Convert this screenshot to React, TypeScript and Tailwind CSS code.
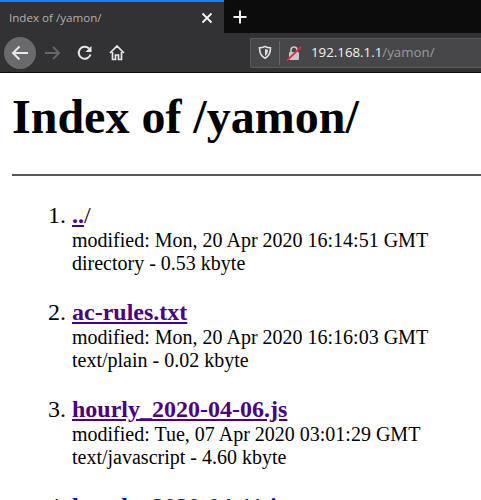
const items = [
  { link: "..", rest: "/", mod: "Mon, 20 Apr 2020 16:14:51 GMT", info: "directory - 0.53 kbyte", color: "text-[#4b0082]" },
  { link: "ac-rules.txt", rest: "", mod: "Mon, 20 Apr 2020 16:16:03 GMT", info: "text/plain - 0.02 kbyte", color: "text-[#4b0082]" },
  { link: "hourly_2020-04-06.js", rest: "", mod: "Tue, 07 Apr 2020 03:01:29 GMT", info: "text/javascript - 4.60 kbyte", color: "text-[#4b0082]" },
  { link: "hourly_2020-04-11.js", rest: "", mod: "Sat, 11 Apr 2020 03:01:29 GMT", info: "text/javascript - 4.60 kbyte", color: "text-[#0000ee]" },
];

export default function App() {
  return (
    <div className="w-[481px] h-[500px] overflow-hidden bg-white font-['Liberation_Serif',serif] text-black flex flex-col">
      <div className="h-[33px] bg-[#0c0c0d] flex shrink-0 font-['Open_Sans',sans-serif]">
        <div className="w-[224px] bg-[#323234] border-t-2 border-[#0a84ff] flex items-center pl-[9px] pr-[10px] justify-between">
          <span className="text-[11.6px] text-[#b1b1b3]">Index of /yamon/</span>
          <svg width="12" height="12" viewBox="0 0 12 12" className="mr-[1px]"><path d="M1.5 1.5l9 9M10.5 1.500l-9 9" stroke="#f5f5f5" strokeWidth="1.8" /></svg>
        </div>
        <div className="flex items-center pl-[9px]">
          <svg width="14" height="14" viewBox="0 0 14 14"><path d="M7 0.5v13M0.5 7h13" stroke="#f0f0f0" strokeWidth="2" /></svg>
        </div>
      </div>
      <div className="h-[40px] bg-[#323234] flex items-center shrink-0 border-b border-[#0c0c0d]">
        <div className="w-[32px] h-[32px] rounded-full bg-[#6a6a6c] ml-[4px] flex items-center justify-center">
          <svg width="18" height="16" viewBox="0 0 18 16"><path d="M17 8H2M8.500 1.500L2 8l6.500 6.500" fill="none" stroke="#e8e8e8" strokeWidth="2" /></svg>
        </div>
        <svg width="17" height="16" viewBox="0 0 18 16" className="ml-[8px]"><path d="M1 8h15M9.500 1.500L16 8l-6.500 6.500" fill="none" stroke="#68686a" strokeWidth="2" /></svg>
        <svg width="16" height="16" viewBox="0 0 16 16" className="ml-[16px]"><path d="M13.500 9.500A6 6 0 1 1 12 3.500" fill="none" stroke="#e8e8e8" strokeWidth="2" /><path d="M14.500 1v6h-6z" fill="#e8e8e8" /></svg>
        <svg width="16" height="16" viewBox="0 0 16 16" className="ml-[16px]"><path d="M1 8l7-7 7 7M3.500 7v7.500h3V10h3v4.500h3V7" fill="none" stroke="#e8e8e8" strokeWidth="1.7" /></svg>
        <div className="ml-[125px] flex-1 h-[30px] bg-[#474749] rounded-l-[2px] border border-[#5a5a5c] border-r-0 flex items-center font-['Open_Sans',sans-serif] text-[13.3px]">
          <svg width="14" height="15" viewBox="0 0 14 15" className="ml-[7px]"><path d="M7 1.500c2 1 4 1.300 5.500 1.300 0 5-1.500 8.500-5.500 10.500-4-2-5.500-5.500-5.500-10.500 1.500 0 3.500-.3 5.500-1.300z" fill="none" stroke="#e0e0e0" strokeWidth="1.600" /><path d="M7 4c1 .5 2 .7 3 .7 0 3-1 5-3 6.300z" fill="#e0e0e0" /></svg>
          <div className="w-px h-[24px] bg-[#66666a] ml-[7px]" />
          <svg width="16" height="16" viewBox="0 0 16 16" className="ml-[6px]"><path d="M5 7V5a3 3 0 0 1 6 0v2" fill="none" stroke="#c8c8c8" strokeWidth="1.600" /><rect x="3" y="7" width="10" height="8" rx="1" fill="#c8c8c8" /><path d="M1 15.500L15 2" stroke="#e22850" strokeWidth="1.800" /></svg>
          <span className="ml-[9px] text-[#f2f2f2]">192.168.1.1</span>
          <span className="text-[#9a9a9c]">/yamon/</span>
        </div>
      </div>
      <div className="pl-3 -mr-3 min-h-0">
        <h1 className="text-[48px] font-bold leading-[55px] mt-[16px]">Index of /yamon/</h1>
        <div className="mt-[30px] h-[2px] bg-[#595959]" />
        <ol className="list-decimal pl-[60px] mt-[26px] text-[20px] leading-[normal]">
          {items.map((it) => (
            <li key={it.link} className="mb-[24px] marker:text-[24px]">
              <a className={`${it.color} font-bold underline text-[24px]`} href="#">{it.link}</a>
              <span className="text-[24px]">{it.rest}</span>
              <br />
              modified: {it.mod}
              <br />
              {it.info}
            </li>
          ))}
        </ol>
      </div>
    </div>
  );
}
